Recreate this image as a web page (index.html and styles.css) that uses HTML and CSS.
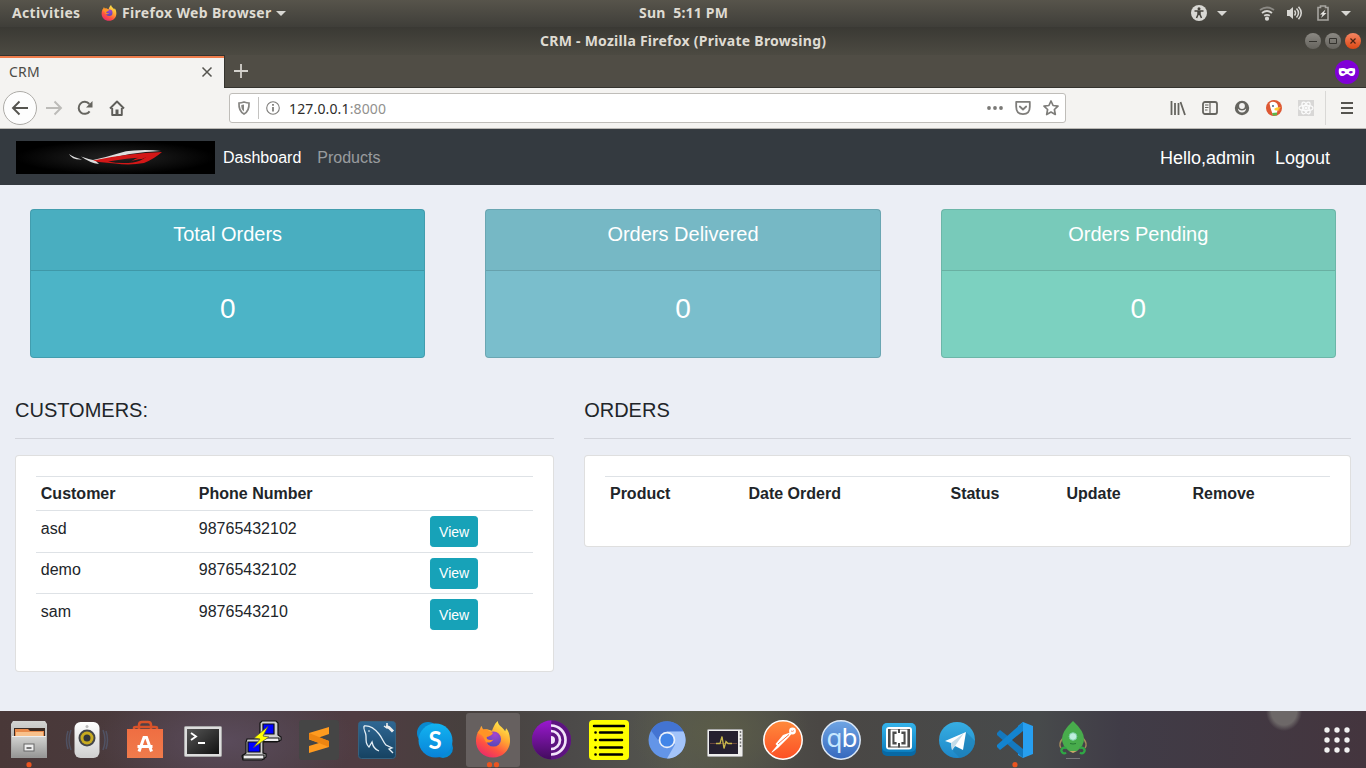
FILE: index.html
```html
<!DOCTYPE html>
<html lang="en">
<head>
<meta charset="utf-8">
<title>CRM</title>
<link rel="stylesheet" href="styles.css">
</head>
<body>
<svg width="0" height="0" class="defs">
  <defs>
    <linearGradient id="fx" x1=".8" y1="0" x2=".25" y2="1"><stop offset="0" stop-color="#fff44f"/><stop offset=".4" stop-color="#ffa632"/><stop offset=".7" stop-color="#ff5340"/><stop offset="1" stop-color="#e8286d"/></linearGradient>
    <radialGradient id="fxg" cx=".6" cy=".2" r=".8"><stop offset="0" stop-color="#a644cf"/><stop offset="1" stop-color="#5348b8"/></radialGradient>
    <linearGradient id="metal" x2="0" y2="1"><stop offset="0" stop-color="#d4d4d2"/><stop offset="1" stop-color="#979796"/></linearGradient>
    <linearGradient id="white" x2="0" y2="1"><stop offset="0" stop-color="#fff"/><stop offset="1" stop-color="#cfcfcf"/></linearGradient>
    <linearGradient id="bag" x2="0" y2="1"><stop offset="0" stop-color="#ef6e42"/><stop offset="1" stop-color="#f07b4c"/></linearGradient>
    <linearGradient id="term" x2="1" y2="1"><stop offset="0" stop-color="#555"/><stop offset=".5" stop-color="#333"/><stop offset="1" stop-color="#111"/></linearGradient>
    <linearGradient id="sql" x2="0" y2="1"><stop offset="0" stop-color="#2f6794"/><stop offset="1" stop-color="#164261"/></linearGradient>
    <linearGradient id="sky" x2="0" y2="1"><stop offset="0" stop-color="#12b4f1"/><stop offset="1" stop-color="#0882d8"/></linearGradient>
    <linearGradient id="tor" x2="0" y2="1"><stop offset="0" stop-color="#9a18cf"/><stop offset="1" stop-color="#420c5d"/></linearGradient>
    <linearGradient id="pm" x2="0" y2="1"><stop offset="0" stop-color="#ff8a3c"/><stop offset="1" stop-color="#fc4f25"/></linearGradient>
    <linearGradient id="qb" x2="0" y2="1"><stop offset="0" stop-color="#6fa5e4"/><stop offset="1" stop-color="#3568bd"/></linearGradient>
    <linearGradient id="br" x2="0" y2="1"><stop offset="0" stop-color="#36b4ea"/><stop offset="1" stop-color="#0b7fc0"/></linearGradient>
    <linearGradient id="tg" x2="0" y2="1"><stop offset="0" stop-color="#37aee2"/><stop offset="1" stop-color="#1e88c9"/></linearGradient>
    <symbol id="firefox" viewBox="0 0 36 38">
      <path fill="url(#fx)" d="M18 37.500C8 37.500.5 30 .5 20.500c0-5 1.500-9 4-12L6 5l2 4 4-.5L17 10c2-5 3-7.500 6-10 0 5 5 6 7.500 10.500l1-3C34 10 35.500 15 35.500 20c0 10-7.500 17.500-17.500 17.500z"/>
      <circle cx="18.500" cy="18.500" r="7.800" fill="url(#fxg)"/>
      <path fill="#ff9426" d="M2 12c4-4 7-3.500 9.500-3.500C13 10 15 11 18 12c-.5 2.500-4 3.500-6.500 4.500-.5 2.500 3 4 7 2.500-2 3-5 3.500-7.500 3-2-3-2-7-9-10z"/>
    </symbol>
  </defs>
</svg>

<div class="screen">
  <header class="topbar">
    <span class="tb-text activities">Activities</span>
    <svg class="fxsmall" width="16" height="16"><use href="#firefox"/></svg>
    <span class="tb-text appname">Firefox Web Browser</span>
    <i class="caret"></i>
    <span class="tb-text clock">Sun&nbsp; 5:11 PM</span>
    <div class="tray">
      <svg width="16" height="16" viewBox="0 0 16 16"><circle cx="8" cy="8" r="8" fill="#d8d7d3"/><circle cx="8" cy="3.700" r="1.500" fill="#45433d"/><path d="M3.500 6h9M7 6v3.500L5.500 13M9 6v3.500l1.500 3.500M8 6v4" fill="none" stroke="#45433d" stroke-width="1.500"/></svg>
      <i class="caret c1"></i>
      <svg class="wifi" width="16" height="16" viewBox="0 0 16 16" fill="none" stroke="#d8d7d3" stroke-width="1.800"><path d="M1 5q7-5 14 0" stroke="#8b8984"/><path d="M3 8q5-4 10 0M5.200 10.800q2.800-2 5.600 0"/><circle cx="8" cy="13.700" r="1.200" fill="#d8d7d3"/></svg>
      <svg class="vol" width="17" height="16" viewBox="0 0 17 16" fill="none" stroke="#d8d7d3" stroke-width="1.500"><path d="M1 5h2.500L7 2v12l-3.500-3H1z" fill="#d8d7d3" stroke="none"/><path d="M8.500 5.500q2 2.500 0 5M10.500 3.500q4 4.500 0 9M12.500 1.800q5.500 6.200 0 12.400"/></svg>
      <svg class="bat" width="14" height="16" viewBox="0 0 14 16"><path d="M2 2.500h2.500v-1.500h5v1.500H12V15H2z" fill="none" stroke="#a7a5a0" stroke-width="1.600"/><path d="M9.500 4.500L4 9.500h2.500L5 13l5.500-5H8z" fill="#e6e5e2"/></svg>
      <i class="caret c2"></i>
    </div>
  </header>

  <div class="titlebar">
    <span class="tb-text wintitle">CRM - Mozilla Firefox (Private Browsing)</span>
    <div class="winbtns">
      <span class="wb"><svg width="16" height="16"><path d="M4 8.500h8" stroke="#34332e"/></svg></span>
      <span class="wb"><svg width="16" height="16"><path d="M4.500 5.500h7v5h-7z" stroke="#34332e" fill="none"/></svg></span>
      <span class="wb close"><svg width="16" height="16"><path d="M5.500 5.500l5 5m0-5l-5 5" stroke="#4a2313" stroke-width="1.200"/></svg></span>
    </div>
  </div>

  <div class="tabstrip">
    <div class="tab"><span>CRM</span>
      <svg width="12" height="12" viewBox="0 0 12 12"><path d="M1.500 1.500l9 9m0-9l-9 9" stroke="#55544f" stroke-width="1.500"/></svg>
    </div>
    <svg class="plus" width="16" height="16"><path d="M8 1v14M1 8h14" stroke="#d3d1cb" stroke-width="1.800"/></svg>
    <svg class="mask" width="24" height="24" viewBox="0 0 24 24"><circle cx="12" cy="12" r="12" fill="#8000d7"/><path fill="#fff" fill-rule="evenodd" d="M4 8.500c3-1 6-.5 8 .8 2-1.300 5-1.800 8-.8 1 6-1 7.500-3.500 7.500-2 0-2.800-2-4.500-2s-2.500 2-4.500 2C5 16 3 14.500 4 8.500zM6 12c1 1.800 3 1.800 4.300.2C9 10.500 7 10.500 6 12zm12 0c-1-1.500-3-1.500-4.300.2C15 13.800 17 13.800 18 12z"/></svg>
  </div>

  <div class="toolbar">
    <div class="back"><svg width="18" height="16" viewBox="0 0 18 16" fill="none" stroke="#55544f" stroke-width="1.900"><path d="M17 8H2M8.500 1.500L2 8l6.500 6.500"/></svg></div>
    <svg class="fwd" width="18" height="16" viewBox="0 0 18 16" fill="none" stroke="#bcbbb8" stroke-width="1.900"><path d="M1 8h15M9.500 1.500L16 8l-6.500 6.500"/></svg>
    <svg class="reload" width="16" height="16" viewBox="0 0 16 16" fill="none" stroke="#65645f" stroke-width="2"><path d="M12.600 11.300A6 6 0 1 1 12.300 4"/><path d="M15.500 1v6.500H9z" fill="#65645f" stroke="none"/></svg>
    <svg class="home" width="16" height="16" viewBox="0 0 16 16" fill="none" stroke="#5f5e5a" stroke-width="1.900" stroke-linejoin="round"><path d="M1 8.500L8 1.500l7 7M3.200 8v7h9.600V8"/><path d="M6.500 15V9.500h3V15z" fill="#5f5e5a" stroke="none"/></svg>
    <div class="urlbar">
      <svg class="shield" width="14" height="14" viewBox="0 0 14 14" fill="none" stroke="#858481" stroke-width="1.700"><path d="M7 1q3 1 5 1 .5 8-5 11Q1.500 10 2 2q2 0 5-1z"/><path d="M7 3.500v7Q4 8.500 4.300 4z" fill="#858481" stroke="none"/></svg>
      <i class="usep"></i>
      <svg class="info" width="14" height="14" viewBox="0 0 14 14"><circle cx="7" cy="7" r="6.300" fill="none" stroke="#7e7d7a" stroke-width="1.100"/><path d="M7 6v4.500M7 3v1.700" stroke="#777672" stroke-width="1.700"/></svg>
      <span class="url"><b>127.0.0.1</b>:8000</span>
      <svg class="dots" width="16" height="6" fill="#7a7976"><circle cx="2" cy="3" r="1.900"/><circle cx="8" cy="3" r="1.900"/><circle cx="14" cy="3" r="1.900"/></svg>
      <svg class="pocket" width="16" height="16" viewBox="0 0 16 16" fill="none" stroke="#7e7d7a" stroke-width="1.800" stroke-linecap="round" stroke-linejoin="round"><path d="M1.200 1.800h13.600v5q0 7.400-6.800 7.400T1.200 6.800z"/><path d="M4.800 6.500L8 9.500l3.200-3"/></svg>
      <svg class="star" width="16" height="16" viewBox="0 0 16 16" fill="none" stroke="#7e7d7a" stroke-width="1.700" stroke-linejoin="round"><path d="M8 1l2.100 4.500 4.900.6-3.600 3.400.9 5L8 12.100l-4.300 2.400.9-5L1 6.100l4.900-.6z"/></svg>
    </div>
    <div class="tools">
      <svg width="16" height="16" fill="none" stroke="#65645f" stroke-width="1.800"><path d="M1.500 1v14M5 3v12M8.500 3v12M10.500 2l4.500 13"/></svg>
      <svg width="16" height="16" fill="none" stroke="#65645f" stroke-width="1.800"><rect x="1" y="2" width="14" height="12" rx="2"/><path d="M8 2v12M3 5h3.500M3 7.500h3.500M3 10h2.500" stroke-width="1.200"/></svg>
      <svg width="16" height="16"><circle cx="8" cy="8" r="7.200" fill="#65645f"/><circle cx="8" cy="6" r="2.900" fill="#f3f2f1"/><path d="M3.800 8.600Q5.500 10.500 8 10.500t4.200-1.900Q11.500 12.500 8 12.500T3.800 8.600z" fill="#f3f2f1"/></svg>
      <svg width="16" height="16" viewBox="0 0 16 16"><circle cx="8" cy="8" r="8" fill="#de5833"/><path d="M3.500 3.500q2-2.500 5-1.500 3.500 1 3.500 5L11 13l-4 2Q4.500 9 3.500 3.500z" fill="#fff"/><path d="M8.500 8.500q3-1.600 6.500-1-2 1.500-3 1.500l2 1q-3 1-5.500 0z" fill="#fc3"/><path d="M6 13l5-.5v2.700l-4 .5z" fill="#5fb648"/><circle cx="7" cy="6" r=".9" fill="#357"/></svg>
      <svg width="16" height="16" viewBox="0 0 16 16" fill="none" stroke="#fbfbfb" stroke-width="1.200"><path d="M0 0h16v16H0z" fill="#d8d7d6" stroke="none"/><ellipse cx="8" cy="8" rx="7" ry="2.600"/><ellipse cx="8" cy="8" rx="6.500" ry="2.600" transform="rotate(60 8 8)"/><ellipse cx="8" cy="8" rx="6.500" ry="2.600" transform="rotate(120 8 8)"/><circle cx="8" cy="8" r="1" fill="#fff"/></svg>
    </div>
    <i class="tsep"></i>
    <svg class="burger" width="12" height="14"><path d="M0 2h12M0 7h12M0 12h12" stroke="#55544f" stroke-width="2"/></svg>
  </div>

  <nav class="navbar">
    <svg class="logo" width="199" height="33" viewBox="0 0 199 33">
      <defs><radialGradient id="lg" cx=".5" cy=".5" r=".5"><stop offset="0" stop-color="#242424"/><stop offset="1" stop-color="#000"/></radialGradient></defs>
      <path d="M0 0h199v33H0z" fill="url(#lg)"/>
      <path d="M53 13q4 3 13 5.500-10 .5-13-5.500zM65 15.500q7 2.500 12 3.500 14-3 25-6.500Q110 9.500 118 9.500q14-1 27 .5-15 .5-31 3-17 3.500-34 7l3 3q-9-1-18-7.500z" fill="#dedede"/>
      <path fill-rule="evenodd" d="M77 19.500Q112 12 146 11q-8 7-18 11-14 2.500-29 .5l-16-1.500zM92 20.500q12 2.500 25 1 7-1 13-5.500-20 1-38 4.500z" fill="#d31717"/>
      <path d="M92 18.500q22-3.500 43-4.500l-9 4q-7 .5-11 2.500 4-3 8-4-16 0-31 2z" fill="#d31717"/>
    </svg>
    <a class="navlink on">Dashboard</a>
    <a class="navlink">Products</a>
    <span class="hello">Hello,admin</span>
    <a class="logout">Logout</a>
  </nav>

  <main class="page">
    <section class="stats">
      <div class="stat total"><div class="stat-head">Total Orders</div><div class="stat-body">0</div></div>
      <div class="stat delivered"><div class="stat-head">Orders Delivered</div><div class="stat-body">0</div></div>
      <div class="stat pending"><div class="stat-head">Orders Pending</div><div class="stat-body">0</div></div>
    </section>
    <section class="columns">
      <div class="col customers">
        <h5>CUSTOMERS:</h5><hr>
        <div class="card">
          <table>
            <colgroup><col style="width:158px"><col style="width:231.300px"><col></colgroup>
            <tr><th>Customer</th><th>Phone Number</th><th></th></tr>
            <tr class="low"><td>asd</td><td>98765432102</td><td><a class="btn">View</a></td></tr>
            <tr><td>demo</td><td>98765432102</td><td><a class="btn">View</a></td></tr>
            <tr class="low"><td>sam</td><td>9876543210</td><td><a class="btn">View</a></td></tr>
          </table>
        </div>
      </div>
      <div class="col orders">
        <h5>ORDERS</h5><hr>
        <div class="card">
          <table>
            <colgroup><col style="width:138.500px"><col style="width:202px"><col style="width:116px"><col style="width:126px"><col></colgroup>
            <tr><th>Product</th><th>Date Orderd</th><th>Status</th><th>Update</th><th>Remove</th></tr>
          </table>
        </div>
      </div>
    </section>
  </main>

  <footer class="dock">
    <div class="app"><svg viewBox="0 0 54 57">
      <path d="M11 10h32l2 3v34H9V13z" fill="url(#metal)"/><path d="M12 17h31v9H12z" fill="#3b2a22"/><path d="M13 18h13l2 2h14v6H13z" fill="#e88a4b"/><path d="M14 21h27v4H14z" fill="#f8c18c"/><path d="M10 25h34v21H10z" fill="url(#metal)"/><path d="M10 25.500h34" stroke="#eee"/><rect x="22" y="33" width="10" height="7" fill="#eee" stroke="#666"/><path d="M24.500 36h5v2h-5z" fill="#777"/><circle cx="27" cy="53.700" r="2.600" fill="#e95420"/></svg></div>
    <div class="app"><svg viewBox="0 0 54 57">
      <path d="M11 19q-4 10 0 20M43 19q4 10 0 20M8 20q-3 9 0 18M46 20q3 9 0 18" fill="none" stroke="#55698a" stroke-width="1.500" opacity=".5"/><rect x="14.500" y="11" width="25" height="36" rx="6" fill="url(#white)"/><circle cx="27" cy="27" r="8.500" fill="#44464a"/><circle cx="27" cy="27" r="6.500" fill="#c8ab20"/><circle cx="27" cy="27" r="3.500" fill="#33363c"/><circle cx="27" cy="15.500" r="1.500" fill="#bbb"/></svg></div>
    <div class="app"><svg viewBox="0 0 54 57">
      <path d="M16 21v-4q0-1 2-1h19q2 0 2 1v4M21 21v-7q0-3 3-3h6q3 0 3 3v7" fill="none" stroke="#d9532a" stroke-width="2.500"/><path d="M9 18h36v29H9z" fill="url(#bag)"/><path d="M21 40.500l5-14h2.500l5 14M19.500 35.500h15" fill="none" stroke="#fff" stroke-width="3"/></svg></div>
    <div class="app"><svg viewBox="0 0 54 57">
      <rect x="8.500" y="15.500" width="37" height="30" rx="1" fill="#ddd" stroke="#aaa"/><path d="M11 18h32v25H11z" fill="url(#term)"/><path d="M15 22l5 3.500-5 3.500M22 32h7" fill="none" stroke="#fff" stroke-width="1.900"/></svg></div>
    <div class="app"><svg viewBox="0 0 54 57" stroke="#111" stroke-width="1.200">
      <path d="M28 10h14l2 2v12l3 2v3l-4 2H28l-2-3V12z" fill="#d0d0d0"/><path d="M29 13h11v10H29z" fill="#00f"/><path d="M27 27h18v3.500H27z" fill="#eee"/><path d="M13 28h14l2 2v12l3 1v3l-4 3H9l-1-4 4-3V31z" fill="#d0d0d0"/><path d="M14 31h12v10H14z" fill="#00f"/><path d="M9 44h21v4H9z" fill="#eee"/><path d="M34 15.500L20 27l6 1-6.500 8.500L35 26l-6-1z" fill="#ff0" stroke="#554" stroke-width=".8"/></svg></div>
    <div class="app"><svg viewBox="0 0 54 57">
      <rect x="7" y="9" width="40" height="40" rx="3" fill="#454545"/><path d="M37 16v7l-10 3.500 10 3.500v6l-20 6v-7l10-3-10-3.500V22z" fill="#ff9b1f"/><path d="M17 22l20 8v6l-20-8z" fill="#ed8511"/></svg></div>
    <div class="app"><svg viewBox="0 0 54 57">
      <rect x="8.500" y="10.500" width="37" height="37" rx="3" fill="url(#sql)" stroke="#35617f"/><path d="M14 15c6-1 11 3 15 8s4 8 7 11l6 3-3 1 4 4M14 15c-1 4 2 6 2 10 0 6 0 8 3 11l3-5c1 5 4 8 7 9" fill="none" stroke="#e6eff5" stroke-width="1.300"/><circle cx="19" cy="20" r=".8" fill="#fff"/><path d="M36 15.500l3 1 4 4" fill="none" stroke="#eee" stroke-width="3"/><path d="M34 15l3 2M37 12v4" stroke="#eee" stroke-width="1.500"/></svg></div>
    <div class="app"><svg viewBox="0 0 54 57">
      <circle cx="20" cy="22" r="11" fill="#0989cf"/><circle cx="35" cy="37" r="10" fill="#078bd5"/><circle cx="27.500" cy="29.500" r="17" fill="url(#sky)"/><text x="27" y="38" text-anchor="middle" class="skype">S</text></svg></div>
    <div class="app active"><svg viewBox="0 0 54 57"><use href="#firefox" x="9" y="10" width="36" height="37"/><circle cx="23.500" cy="53.700" r="2.600" fill="#e95420"/><circle cx="30.500" cy="53.700" r="2.600" fill="#e95420"/></svg></div>
    <div class="app"><svg viewBox="0 0 54 57">
      <circle cx="27.500" cy="29" r="19.500" fill="#6d2492"/><path d="M27.500 9.500a19.500 19.500 0 0 0 0 39z" fill="url(#tor)"/><path d="M27.500 9.500a19.500 19.500 0 0 1 0 39z" fill="#5d1380"/><path d="M27 14.500a14.500 14.500 0 0 1 0 29M27 20a9 9 0 0 1 0 18" fill="none" stroke="#f2e4fa" stroke-width="2.700"/><path d="M27 25a4 4 0 0 1 0 8z" fill="#f2e4fa"/></svg></div>
    <div class="app"><svg viewBox="0 0 54 57">
      <rect x="7" y="9" width="40" height="40" rx="4" fill="#ff0"/><path d="M12 15h30M18 21.500h22M18 29h22M18 36.500h22M18 43.500h22" stroke="#000" stroke-width="2.500" stroke-linecap="round"/><path d="M13.500 21.500h.1M13.500 29h.1M13.500 36.500h.1M13.500 43.500h.1" stroke="#000" stroke-width="2.600" stroke-linecap="round"/></svg></div>
    <div class="app"><svg viewBox="0 0 54 57">
      <circle cx="27" cy="29" r="18.500" fill="#6395e8"/><path d="M11 19.500A18.500 18.500 0 0 1 43.500 20.500L27 21 18 29z" fill="#4374d2"/><path d="M27 20.500h16.500A18.500 18.500 0 0 1 27 47.500l8-14z" fill="#a3c4fa"/><circle cx="27" cy="29" r="8.300" fill="#e9effa"/><circle cx="27" cy="29" r="6.600" fill="#4285e8"/></svg></div>
    <div class="app"><svg viewBox="0 0 54 57">
      <rect x="9.500" y="18.500" width="35" height="27" rx="1" fill="#eeeeec" stroke="#aaa"/><path d="M11 20h29v23H11z" fill="#25202f"/><path d="M12 32.500h27" stroke="#8a5a45" stroke-width=".7"/><path d="M18 32.500h4l2-7 2 12 2-7 2 2h4" fill="none" stroke="#c9b84b" stroke-width="1.300"/><path d="M42.500 20v17" stroke="#777" stroke-width="1.500" stroke-dasharray="2 1.500"/></svg></div>
    <div class="app"><svg viewBox="0 0 54 57">
      <circle cx="27" cy="29" r="19.200" fill="url(#pm)" stroke="#fff" stroke-width="1.500"/><circle cx="36.500" cy="20" r="3.400" fill="#fff"/><path d="M34 21.500l-7 2.500-7.500 9 1.500 1.500-5 6-.5 1.500 6.500-5 11-11 2.500-3z" fill="#fff"/><path d="M22 33l11-9.500" stroke="#f77042"/><path d="M35 20q2 1 3-.5" fill="none" stroke="#f77042" stroke-width=".8"/></svg></div>
    <div class="app"><svg viewBox="0 0 54 57">
      <circle cx="27" cy="29" r="19.200" fill="url(#qb)" stroke="#dce8f6" stroke-width="1.500"/><text x="27.500" y="36" text-anchor="middle" class="qbt"><tspan fill="#c8e8ff">q</tspan>b</text></svg></div>
    <div class="app"><svg viewBox="0 0 54 57">
      <rect x="10" y="12" width="34" height="33" rx="5" fill="#0869a5"/><rect x="10" y="12" width="34" height="29" rx="5" fill="url(#br)"/><rect x="14" y="16" width="26" height="22.500" rx="3" fill="#fff"/><path d="M16 18h22v18.500H16z" fill="#4b4b4b"/><path d="M25.500 19.500h-6v15h6v-3.500h3v3.500h6v-15h-6V23h-3z" fill="none" stroke="#fff" stroke-width="1.800"/><path d="M22.500 23h9v8h-9z" fill="#fff"/><path d="M27 18v4M27 32v4.500" stroke="#4b4b4b" stroke-width="2"/></svg></div>
    <div class="app"><svg viewBox="0 0 54 57">
      <circle cx="27" cy="29" r="18" fill="url(#tg)"/><path d="M36 21l9 9a18 18 0 0 1-15 17l-7-7z" fill="#1c79ad" opacity=".5"/><path d="M15 30l21-9-3 18-8-4-3 4-1-7z" fill="#fff"/><path d="M21 32l13-10-9 13-3 4z" fill="#c4dce9"/></svg></div>
    <div class="app"><svg viewBox="0 0 54 57">
      <path d="M35 11l10 4v28l-10 4-5-3V15z" fill="#279ff0"/><path d="M9 22l3-3 23 18v10L9 24z" fill="#1478be"/><path d="M9 36l3 3 23-18V11L9 34z" fill="#1384d0"/><path d="M35 20v18L24 29z" fill="#45413f"/><circle cx="27" cy="53.700" r="2.600" fill="#e95420"/></svg></div>
    <div class="app"><svg viewBox="0 0 54 57">
      <path d="M17 27q-5 6-2 10M37 27q5 6 2 10" fill="none" stroke="#a48b5c" stroke-width="1.500"/><path d="M27 10q11 10 11 18 0 7-7 12h-8q-7-5-7-12 0-8 11-18z" fill="#48ac4c"/><circle cx="27" cy="25.500" r="3.800" fill="#bfeedd" stroke="#7bcfa3" stroke-width="1"/><path d="M24 32.500q3 1 6 0" stroke="#277b35" fill="none"/><path d="M23 40h8l-4 2z" fill="#c8a968"/><path d="M20 37.500a2.700 2.700 0 1 0 0 4M34 37.500a2.700 2.700 0 1 1 0 4" fill="none" stroke="#2fa845" stroke-width="2.200"/><path d="M20 47.500h14" stroke="#77777a"/></svg></div>
    <svg class="grid" width="28" height="28" fill="#f1f1f1"><circle cx="4" cy="4" r="2.700"/><circle cx="14" cy="4" r="2.700"/><circle cx="24" cy="4" r="2.700"/><circle cx="4" cy="14" r="2.700"/><circle cx="14" cy="14" r="2.700"/><circle cx="24" cy="14" r="2.700"/><circle cx="4" cy="24" r="2.700"/><circle cx="14" cy="24" r="2.700"/><circle cx="24" cy="24" r="2.700"/></svg>
  </footer>
</div>
</body>
</html>
```
FILE: styles.css
```css
* { box-sizing: border-box; }
body { margin: 0; font-family: "Liberation Sans", Arial, sans-serif; color: #212529; }
svg { display: block; flex: none; }
.defs { position: absolute; }
.screen { width: 1366px; height: 768px; display: flex; flex-direction: column; overflow: hidden; }

/* Desktop top bar */
.tb-text { font: bold 14px/20px "Noto Sans", sans-serif; color: #dfdbd2; white-space: nowrap; }
.topbar { height: 27px; flex: none; background: linear-gradient(#57544b, #3f3e39); display: flex; align-items: center; padding: 0 0 1px 12px; }
.activities { width: 89px; letter-spacing: .35px; }
.fxsmall { margin-top: -1px; }
.appname { width: 154px; margin-left: 5px; letter-spacing: .33px; }
.caret { width: 0; height: 0; flex: none; border: 5px solid transparent; border-top-color: #d8d7d3; border-bottom: 0; }
.clock { margin-left: 353px; width: 91px; letter-spacing: .2px; }
.tray { display: flex; align-items: center; margin-left: 461px; }
.c1 { margin-left: 10px; }
.wifi { margin-left: 32px; }
.vol { margin-left: 11px; }
.bat { margin-left: 13px; }
.c2 { margin-left: 11px; }

.titlebar { height: 28px; flex: none; background: linear-gradient(#3a3934, #4c4a42); display: flex; align-items: center; justify-content: space-between; padding: 0 5px 0 540px; }
.wintitle { letter-spacing: .25px; }
.winbtns { display: flex; gap: 4px; }
.wb { width: 16px; height: 16px; border-radius: 50%; background: linear-gradient(#8b8983, #65635d); }
.wb.close { background: linear-gradient(#f58562, #dd4814); }

/* Browser chrome */
.tabstrip { height: 33px; flex: none; background: #504d45; border-bottom: 1px solid #34332e; display: flex; align-items: center; padding-right: 7px; }
.tab { width: 225px; height: 33px; align-self: flex-start; background: #f4f3f1; border-right: 1px solid #34332e; border-top: 1px solid #34332e; box-shadow: inset 0 2px #ee7c4b; display: flex; align-items: center; justify-content: space-between; padding: 0 11px 0 9px; font: 14px/20px "Noto Sans", sans-serif; letter-spacing: .2px; color: #4c4b47; }
.plus { margin-left: 8px; }
.mask { margin: 1px 0 0 auto; }
.toolbar { height: 41px; flex: none; background: #f4f3f1; border-bottom: 1px solid #b9b7b3; display: flex; align-items: center; padding-left: 3px; }
.back { width: 34px; height: 34px; border: 1px solid #adaba7; border-radius: 50%; background: #fdfdfd; display: flex; align-items: center; justify-content: center; }
.fwd { margin-left: 8px; }
.reload { margin-left: 14px; }
.home { margin-left: 16px; }
.urlbar { margin-left: 104px; width: 837px; height: 30px; background: #fff; border: 1px solid #bfbdb9; border-radius: 3px; display: flex; align-items: center; padding-left: 7px; }
.usep { width: 1px; height: 22px; background: #c4c3c1; margin: 0 7px; }
.url { width: 706px; margin-left: 9px; padding-top: 1px; font: 14px/20px "Noto Sans", sans-serif; letter-spacing: .15px; color: #92918e; }
.url b { font-weight: normal; color: #2e2d2b; }
.dots { margin-left: -8px; }
.pocket { margin-left: 12px; }
.star { margin-left: 12px; }
.tools { display: flex; gap: 16px; margin-left: 104px; }
.tsep { width: 1px; height: 34px; background: #d9d8d6; margin: 0 15px 0 11px; }

/* Site navbar */
.navbar { height: 56px; flex: none; background: #343a40; display: flex; align-items: center; padding: 1px 36px 0 16px; font-size: 16px; line-height: 20px; color: #fff; }
.navlink { margin-left: 8px; color: rgba(255,255,255,.5); }
.navlink + .navlink { margin-left: 16px; }
.navlink.on { color: #fff; }
.hello { margin-left: auto; font-size: 18px; }
.logout { margin-left: 20px; font-size: 18px; }

.page { flex: 1; background: #ebeef5; }
.stats { display: grid; grid-template-columns: repeat(3, 1fr); padding-top: 24px; }
.stat { margin: 0 30px; height: 149px; border: 1px solid rgba(0,0,0,.125); border-radius: 4px; color: #fff; text-align: center; }
.stat-head { height: 61px; padding-top: 12px; background: rgba(0,0,0,.03); border-bottom: 1px solid rgba(0,0,0,.125); font-size: 20px; line-height: 24px; }
.stat-body { padding-top: 21px; font-size: 28px; line-height: 34px; }
.total { background: #4cb4c7; }
.delivered { background: #7abecc; }
.pending { background: #7cd1c0; }

.columns { display: flex; align-items: flex-start; padding-top: 40px; }
.col { padding: 0 15px; }
.customers { width: 41.6667%; }
.orders { width: 58.3333%; }
h5 { margin: 0 0 16px; font-size: 20px; font-weight: normal; line-height: 24px; }
hr { margin: 0 0 16px; border: 0; border-top: 1px solid rgba(0,0,0,.1); }
.card { background: #fff; border: 1px solid rgba(0,0,0,.125); border-radius: 4px; padding: 20px 20px 36px; }
table { width: 100%; table-layout: fixed; border-collapse: separate; border-spacing: 0; font-size: 16px; line-height: 24px; }
th, td { padding: 5px 4.8px 4px; border-top: 1px solid #dee2e6; text-align: left; vertical-align: top; }
td { height: 41px; }
.low td { height: 42px; }
.btn { display: block; width: 48px; height: 31px; padding: 4px 8px; border: 1px solid #17a2b8; border-radius: 3.200px; background: #17a2b8; color: #fff; font-size: 14px; line-height: 21px; }
.low .btn { padding-top: 5px; }
.low td:not(:last-child) { padding-top: 6px; }

/* Dock */
.dock { height: 57px; flex: none; display: flex; align-items: center; gap: 4px; padding: 0 15px 0 2px;
  background: radial-gradient(ellipse 18px 20px at 1284px 0, #6d6868 70%, transparent), linear-gradient(65deg, transparent 1332px, #6664 1340px, transparent 1350px), radial-gradient(ellipse 90px 60px at 720px 20px, #5b5c48, transparent), radial-gradient(ellipse 130px 60px at 225px 30px, #5a4b5b, transparent), linear-gradient(90deg, #493838, #4b3d42 20%, #503c42 26%, #47403e 34%, #4c4a49 42%, #55574f 50%, #4a4744 60%, #474a4b 76%, #403c47 82%, #44353e); }
.app { width: 54px; height: 57px; flex: none; }
.app svg { width: 54px; height: 57px; }
.app.active { background: #66605f; height: 54px; margin-top: 1px; border-radius: 3px; }
.app.active svg { margin-top: -2px; }
.skype { font: bold 24px Lato, sans-serif; fill: #fff; }
.qbt { font: 26px "Noto Sans", sans-serif; fill: #fff; letter-spacing: -1px; }
.grid { margin-left: auto; }
```
